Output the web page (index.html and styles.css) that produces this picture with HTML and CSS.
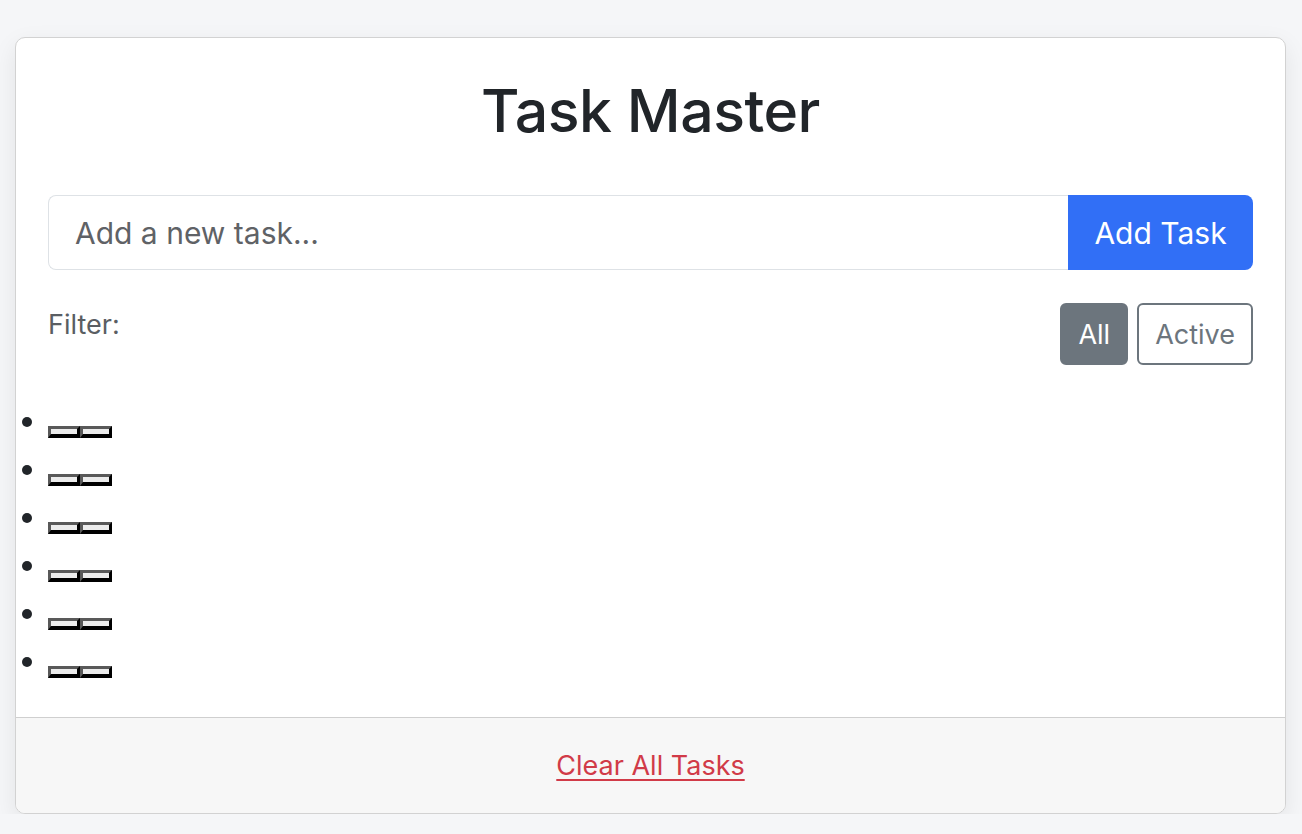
FILE: index.html
```html
<!DOCTYPE html>
<html lang="en">
<head>
<meta charset="utf-8">
<title>Task Master</title>
<link rel="stylesheet" href="styles.css">
</head>
<body>
<div class="page">
  <div class="card">
    <div class="card-body">
      <h1 class="title">Task Master</h1>
      <div class="input-group">
        <input class="task-input" type="text" placeholder="Add a new task...">
        <button class="add-btn" type="button">Add Task</button>
      </div>
      <div class="filter-row">
        <span class="filter-label">Filter:</span>
        <div class="filter-btns">
          <button class="fbtn fbtn-active" type="button">All</button>
          <button class="fbtn" type="button">Active</button>
        </div>
      </div>
    </div>
    <ul class="task-list">
      <li class="task"><span class="stub"></span><span class="stub"></span></li>
      <li class="task"><span class="stub"></span><span class="stub"></span></li>
      <li class="task"><span class="stub"></span><span class="stub"></span></li>
      <li class="task"><span class="stub"></span><span class="stub"></span></li>
      <li class="task"><span class="stub"></span><span class="stub"></span></li>
      <li class="task"><span class="stub"></span><span class="stub"></span></li>
    </ul>
    <div class="card-footer">
      <a class="clear-link" href="#">Clear All Tasks</a>
    </div>
  </div>
</div>
</body>
</html>
```

FILE: styles.css
```css
* { box-sizing: border-box; }
html, body { margin: 0; padding: 0; }
body {
  background: #f5f6f8;
  font-family: Inter, "Noto Sans", "Liberation Sans", sans-serif;
  color: #212529;
}
.page {
  padding: 37px 16px 0 15px;
}
.card {
  background: #fff;
  border: 1px solid #d2d2d2;
  border-radius: 10px;
  box-shadow: 0 8px 24px rgba(0, 0, 0, 0.08);
  overflow: hidden;
}
.card-body {
  padding: 38px 32px 0 32px;
}
.title {
  margin: 0 0 52px 0;
  text-align: center;
  font-size: 59px;
  line-height: 69px;
  font-weight: 500;
  letter-spacing: -0.5px;
  color: #212529;
}
.input-group {
  display: flex;
  height: 75px;
  margin-top: -2px;
}
.task-input {
  flex: 1;
  min-width: 0;
  height: 100%;
  border: 1px solid #dee2e6;
  border-right: none;
  border-radius: 8px 0 0 8px;
  padding: 0 26px;
  font-family: inherit;
  font-size: 30px;
  color: #212529;
  outline: none;
}
.task-input::placeholder { color: #5f6266; }
.add-btn {
  width: 185px;
  height: 100%;
  border: none;
  background: #316ff6;
  color: #fff;
  font-family: inherit;
  font-size: 30px;
  border-radius: 0 8px 8px 0;
}
.filter-row {
  display: flex;
  justify-content: space-between;
  align-items: flex-start;
  margin-top: 33px;
}
.filter-label {
  font-size: 27px;
  line-height: 44px;
  color: #5a5e63;
}
.filter-btns {
  display: flex;
  gap: 9px;
}
.fbtn {
  height: 62px;
  padding: 0 16px;
  border: 2px solid #6c757d;
  background: #fff;
  color: #6c757d;
  font-family: inherit;
  font-size: 27px;
  border-radius: 6px;
}
.fbtn-active {
  background: #6c757d;
  color: #fff;
}
.task-list {
  list-style: none;
  margin: 44px 0 20px 0;
  padding: 0 0 0 32px;
}
.task {
  display: flex;
  align-items: flex-start;
  height: 48px;
}
.task::before {
  content: "";
  width: 10px;
  height: 10px;
  border-radius: 50%;
  background: #212529;
  margin: 8px 16px 0 -26px;
  flex: none;
}
.stub {
  display: block;
  width: 32px;
  height: 12px;
  margin-top: 17px;
  background: #ececec;
  border-style: solid;
  border-width: 3px 3px 4px 3px;
  border-color: #595959 #000 #000 #595959;
}
.card-footer {
  border-top: 1px solid #cfcfcf;
  background: #f7f7f7;
  height: 96px;
  display: flex;
  align-items: center;
  justify-content: center;
}
.clear-link {
  color: #d13b48;
  font-size: 27px;
  text-decoration: underline;
  text-underline-offset: 4px;
}
```
